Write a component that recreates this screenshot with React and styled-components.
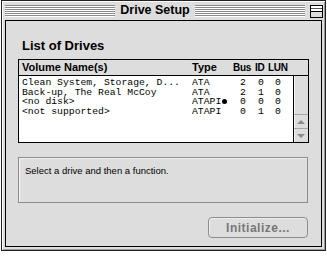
import React from "react";
import styled, { createGlobalStyle } from "styled-components";

const GlobalStyle = createGlobalStyle`
    body {
        margin: 0;
        background: #ffffff;
        font-family: "Liberation Sans", Arial, sans-serif;
    }
`

const drives = [
    { name: "Clean System, Storage, D...", type: "ATA", bus: 2, id: 0, lun: 0 },
    { name: "Back-up, The Real McCoy", type: "ATA", bus: 2, id: 1, lun: 0 },
    { name: "<no disk>", type: "ATAPI", dot: true, bus: 0, id: 0, lun: 0 },
    { name: "<not supported>", type: "ATAPI", bus: 0, id: 1, lun: 0 },
]

const Window = styled.div`
    box-sizing: border-box;
    width: 325px;
    height: 251px;
    margin-left: 1px;
    display: flex;
    flex-direction: column;
    border: 1px solid #222;
    background: #dddddd;
    box-shadow: inset 1px 1px 0 #ffffff, inset -1px -1px 0 #9a9a9a;
`

const TitleBar = styled.div`
    height: 19px;
    display: flex;
    align-items: center;
    padding: 0 2px 0 3px;
    gap: 5px;
`

const Stripes = styled.div`
    flex: 1;
    height: 12px;
    margin-top: 1px;
    background: repeating-linear-gradient(
        to bottom,
        #8a8a8a 0px,
        #8a8a8a 1px,
        #ffffff 1px,
        #ffffff 2px
    );
`

const Title = styled.div`
    font-weight: bold;
    font-size: 12.5px;
    color: #000;
    line-height: 19px;
    white-space: nowrap;
`

const ZoomBox = styled.svg`
    width: 13px;
    height: 13px;
    margin-top: 2px;
    display: block;
`

const Content = styled.div`
    flex: 1;
    margin: 0 3px 3px 3px;
    border: 1px solid #000;
    padding: 16px 12px 0 12px;
    display: flex;
    flex-direction: column;
`

const Heading = styled.div`
    font-weight: bold;
    font-size: 13px;
    line-height: 17px;
    padding-left: 4px;
    color: #000;
`

const ListBox = styled.div`
    box-sizing: border-box;
    margin-top: 5px;
    height: 84px;
    width: 291px;
    border: 1px solid #000;
    display: flex;
    flex-direction: column;
    background: #ffffff;
`

const HeaderRow = styled.div`
    height: 15px;
    display: grid;
    grid-template-columns: 170px 41px 22px 13px auto;
    align-items: center;
    padding-left: 3px;
    background: #dddddd;
    border-bottom: 1px solid #000;
    font-weight: bold;
    font-size: 11px;
    line-height: 15px;
    color: #000;
`

const HeaderCell = styled.span`
    font-size: ${props => (props.$tight ? "10px" : "11px")};
    letter-spacing: ${props => (props.$tight ? "-0.3px" : "0")};
    white-space: nowrap;
`

const ListBody = styled.div`
    flex: 1;
    display: flex;
`

const Rows = styled.div`
    flex: 1;
    padding-top: 2px;
`

const Row = styled.div`
    display: grid;
    grid-template-columns: 170px 48px 18px 17px auto;
    padding-left: 3px;
    font-family: "Liberation Mono", "DejaVu Sans Mono", monospace;
    font-size: 9.75px;
    line-height: 9.5px;
    height: 9.5px;
    color: #000;
    white-space: pre;
`

const Dot = styled.span`
    display: inline-block;
    width: 5px;
    height: 5px;
    margin-left: 1px;
    border-radius: 50%;
    background: #000;
`

const ScrollBar = styled.div`
    width: 14px;
    border-left: 1px solid #000;
    background: #dddddd;
    box-shadow: inset 1px 0 0 #f4f4f4;
    display: flex;
    flex-direction: column;
    justify-content: flex-end;
`

const Arrow = styled.div`
    height: 13px;
    border-top: 1px solid #a8a8a8;
    display: flex;
    align-items: center;
    justify-content: center;
    &::after {
        content: "";
        width: 0;
        height: 0;
        border-left: 4px solid transparent;
        border-right: 4px solid transparent;
        ${props => props.$down
            ? "border-top: 4px solid #8a8a8a;"
            : "border-bottom: 4px solid #8a8a8a;"}
    }
`

const InfoBox = styled.div`
    box-sizing: border-box;
    margin-top: 14px;
    height: 46px;
    width: 290px;
    border: 1px solid #8c8c8c;
    box-shadow: inset 1px 1px 0 #f2f2f2;
    padding: 7px 6px;
    font-size: 9.5px;
    color: #000;
`

const ButtonRow = styled.div`
    display: flex;
    justify-content: flex-end;
    margin-top: 14px;
    padding-right: 1px;
`

const Button = styled.button`
    box-sizing: border-box;
    width: 100px;
    height: 21px;
    border: 1px solid #8c8c8c;
    border-radius: 4px;
    background: #dddddd;
    box-shadow: inset 1px 1px 0 #efefef;
    color: #777777;
    font-family: "Liberation Sans", Arial, sans-serif;
    font-weight: bold;
    font-size: 12px;
    letter-spacing: 0.5px;
    padding: 0;
`

function App() {
    return (
        <>
            <GlobalStyle />
            <Window>
                <TitleBar>
                    <Stripes />
                    <Title>Drive Setup</Title>
                    <Stripes />
                    <ZoomBox viewBox="0 0 13 13">
                        <rect x="0.5" y="0.5" width="12" height="12" fill="#dddddd" stroke="#000" />
                        <rect x="1" y="1" width="11" height="5" fill="#ffffff" />
                        <line x1="1" y1="6.5" x2="12" y2="6.5" stroke="#000" />
                        <line x1="1" y1="3.5" x2="12" y2="3.5" stroke="#555" />
                    </ZoomBox>
                </TitleBar>
                <Content>
                    <Heading>List of Drives</Heading>
                    <ListBox>
                        <HeaderRow>
                            <HeaderCell>Volume Name(s)</HeaderCell>
                            <HeaderCell>Type</HeaderCell>
                            <HeaderCell $tight>Bus</HeaderCell>
                            <HeaderCell $tight>ID</HeaderCell>
                            <HeaderCell $tight>LUN</HeaderCell>
                        </HeaderRow>
                        <ListBody>
                            <Rows>
                                {drives.map((d, i) => (
                                    <Row key={i}>
                                        <span>{d.name}</span>
                                        <span>{d.type}{d.dot && <Dot />}</span>
                                        <span>{d.bus}</span>
                                        <span>{d.id}</span>
                                        <span>{d.lun}</span>
                                    </Row>
                                ))}
                            </Rows>
                            <ScrollBar>
                                <Arrow />
                                <Arrow $down />
                            </ScrollBar>
                        </ListBody>
                    </ListBox>
                    <InfoBox>Select a drive and then a function.</InfoBox>
                    <ButtonRow>
                        <Button disabled>Initialize...</Button>
                    </ButtonRow>
                </Content>
            </Window>
        </>
    )
}

export default App
